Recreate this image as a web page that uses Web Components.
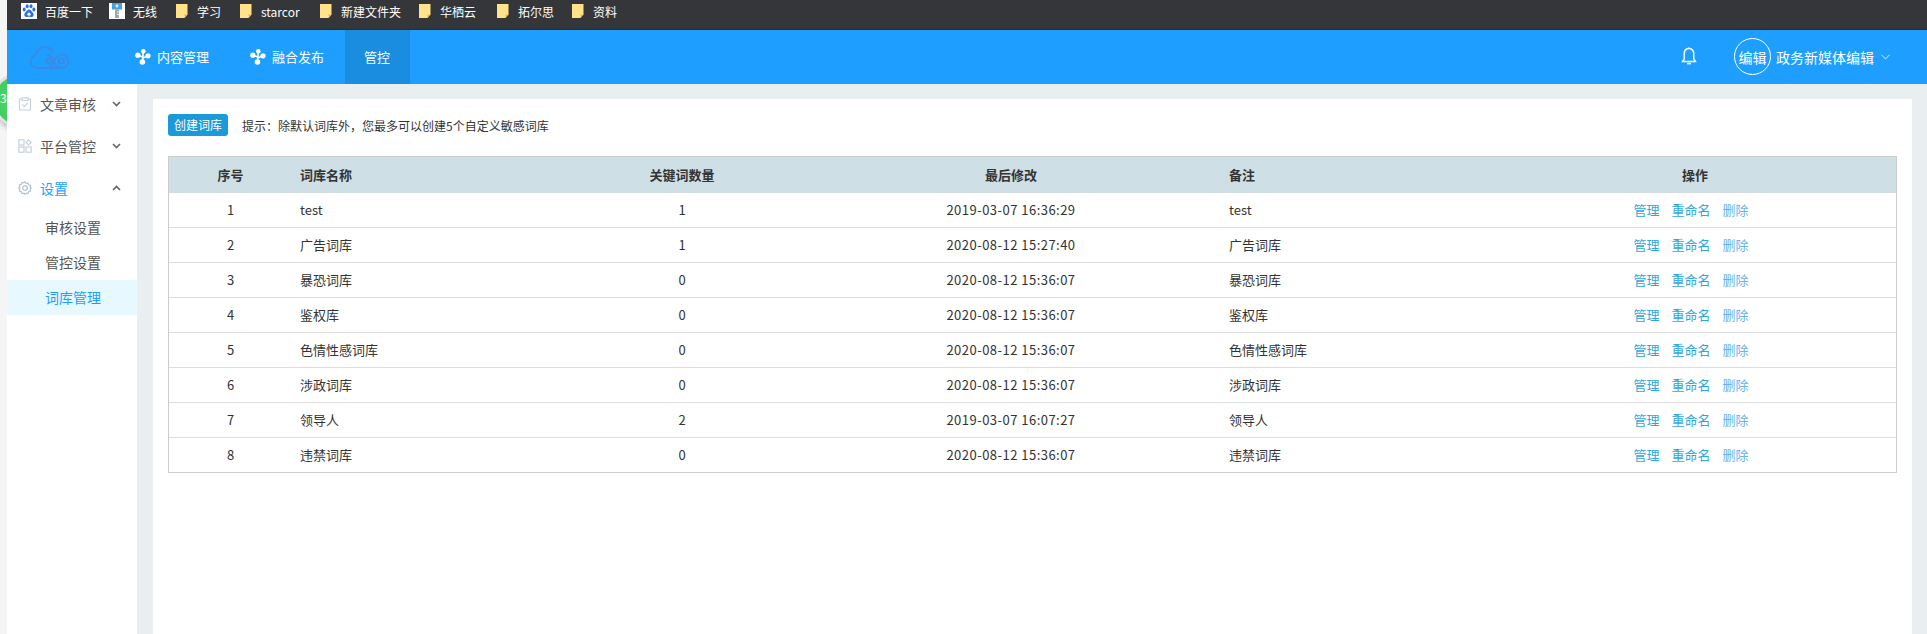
<!DOCTYPE html>
<html lang="zh">
<head>
<meta charset="utf-8">
<title>词库管理</title>
<style>
  html, body { margin: 0; height: 634px; overflow: hidden; }
  body { background: #f5f5f5; font-family: "Noto Sans CJK SC", "Open Sans", sans-serif; font-size: 13px; color: #333; position: relative; }
  x-app { height: 634px; margin-left: 7px; position: relative; z-index: 1; }
</style>
</head>
<body>
<x-green-badge>3</x-green-badge>
<x-app>
  <x-bookmarks slot="bookmarks">
    <x-bookmark kind="baidu">百度一下</x-bookmark>
    <x-bookmark kind="wifi">无线</x-bookmark>
    <x-bookmark>学习</x-bookmark>
    <x-bookmark>starcor</x-bookmark>
    <x-bookmark>新建文件夹</x-bookmark>
    <x-bookmark>华栖云</x-bookmark>
    <x-bookmark>拓尔思</x-bookmark>
    <x-bookmark>资料</x-bookmark>
  </x-bookmarks>
  <x-topbar slot="topbar">
    <x-nav-item icon>内容管理</x-nav-item>
    <x-nav-item icon>融合发布</x-nav-item>
    <x-nav-item active>管控</x-nav-item>
  </x-topbar>
  <x-side-menu slot="side">
    <x-menu-item icon="check">文章审核</x-menu-item>
    <x-menu-item icon="apps">平台管控</x-menu-item>
    <x-menu-item icon="gear" open>设置</x-menu-item>
    <x-sub-item>审核设置</x-sub-item>
    <x-sub-item>管控设置</x-sub-item>
    <x-sub-item active>词库管理</x-sub-item>
  </x-side-menu>
  <x-card slot="main">
    <x-toolbar hint="提示：除默认词库外，您最多可以创建5个自定义敏感词库">创建词库</x-toolbar>
    <x-word-table></x-word-table>
  </x-card>
</x-app>
<script>
function def(name, html) {
  customElements.define(name, class extends HTMLElement {
    constructor() {
      super();
      this.attachShadow({ mode: 'open' });
      if (typeof html !== 'function') this.shadowRoot.innerHTML = html;
    }
    connectedCallback() {
      if (typeof html === 'function') this.shadowRoot.innerHTML = html(this);
    }
  });
}
const ICONS = {
  baidu: '<svg width="16" height="16" viewBox="0 0 16 16"><rect width="16" height="16" fill="#fff"/><g fill="#2b6fe8"><ellipse cx="3.2" cy="6.4" rx="1.5" ry="2"/><ellipse cx="6.2" cy="3.2" rx="1.5" ry="2"/><ellipse cx="10" cy="3.2" rx="1.5" ry="2"/><ellipse cx="12.9" cy="6.4" rx="1.5" ry="2"/><path d="M8 6.6c-1.7 0-2.3 1.6-3.4 2.6-1 .9-1.4 1.7-1.2 3 .2 1.3 1.4 2 2.6 1.8.8-.1 1.3-.3 2-.3s1.3.2 2 .3c1.2.2 2.4-.5 2.6-1.8.2-1.3-.2-2.1-1.2-3C10.3 8.2 9.7 6.6 8 6.6z"/></g><circle cx="8" cy="11.2" r="1.6" fill="#fff"/></svg>',
  wifi: '<svg width="16" height="16" viewBox="0 0 16 16"><rect width="16" height="16" fill="#fff"/><path d="M3 0h10v6.5H3z" fill="#4f9fdf"/><path d="M6 6.5h4V15H6z" fill="#9aa7ad"/><path d="M7.3 1.5h1.400v3H7.300z" fill="#fff"/><path d="M6.500 2.300h3v1h-3z" fill="#fff"/><path d="M10 8.500H8v1h2zM10 11H8v1h2z" fill="#e7ecee"/></svg>',
  folder: '<svg width="12" height="14" viewBox="0 0 12 14"><path d="M0 0h11.500v10.500L8.500 14H0z" fill="#ffe28a"/><path d="M11.500 10.500H8.500V14z" fill="#d9b75a"/></svg>'
};
def('x-app', `<style>
  :host { display: flex; flex-direction: column; }
  .body { flex: 1; display: flex; min-height: 0; }
  .main { flex: 1; display: flex; min-width: 0; background: #e9eef0; padding: 15px 15px 0 16px; }
</style>
<slot name="bookmarks"></slot><slot name="topbar"></slot>
<div class="body"><slot name="side"></slot><div class="main"><slot name="main"></slot></div></div>`);
def('x-bookmarks', `<style>
  :host { display: flex; height: 29.5px; background: #35363a; align-items: flex-start; padding: 3px 0 0 14px; box-sizing: border-box; border-bottom: 1px solid #2c2d30; }
</style><slot></slot>`);
const BM_WIDTHS = { '百度一下': 88, '无线': 66, '学习': 64, 'starcor': 80, '新建文件夹': 99, '华栖云': 78, '拓尔思': 75, '资料': 60 };
def('x-bookmark', el => {
  const kind = el.getAttribute('kind');
  const icon = ICONS[kind] || ICONS.folder;
  const w = BM_WIDTHS[el.textContent.trim()] || 70;
  return `<style>
    :host { display: flex; align-items: center; height: 16px; width: ${w}px; flex: none; color: #fff; font-size: 12px; }
    .i { display: flex; flex: none; width: ${kind ? 16 : 12}px; margin-left: ${kind ? 0 : 1}px; margin-right: ${kind ? 8 : 9}px; }
  </style><span class="i">${icon}</span><slot></slot>`;
});
def('x-topbar', `<style>
  :host { display: flex; height: 54.5px; background: #1e9fff; color: #fff; align-items: stretch; }
  .logo { width: 108px; flex: none; display: flex; align-items: center; padding-left: 22px; box-sizing: border-box; }
  nav { display: flex; gap: 1px; }
  .sp { flex: 1; }
  .bell { display: flex; align-items: center; margin-right: 37px; }
  .user { display: flex; align-items: center; font-size: 14px; padding-right: 37px; }
  .av { width: 35px; height: 35px; border: 1px solid #fff; border-radius: 50%; display: flex; align-items: center; justify-content: center; margin-right: 5px; white-space: nowrap; }
  .ch { margin-left: 7px; display: flex; }
</style>
<div class="logo"><svg width="40" height="26" viewBox="0 0 40 26" fill="none" stroke="#3a8ae6" stroke-width="1.8"><path d="M8 24a6.500 6.500 0 0 1-1.500-12.800C7.800 5.500 12.500 2 17 3c3.300.6 6 3 7 6.200"/><path d="M8 24h24.500a6.800 6.800 0 0 0 0-13.600c-4 0-5.800 3-7.500 6.700-1.700 3.800-3 6.900-7.500 6.900"/><path d="M18 11c3 0 5.500 2.500 6.500 5.500 1 3 3 7.500 8 7.500"/><circle cx="20" cy="17" r="2.500"/><circle cx="32.500" cy="17" r="2.500"/></svg></div>
<nav><slot></slot></nav>
<div class="sp"></div>
<div class="bell"><svg width="16" height="19" viewBox="0 0 16 19" fill="none" stroke="#fff" stroke-width="1.4"><path d="M8 1.500c-3 0-4.800 2.300-4.800 5.200v5.200L1.500 14.500h13l-1.700-2.600V6.700c0-2.900-1.800-5.200-4.800-5.200z"/><path d="M6 16.500h4" stroke="#cfe9ff" stroke-width="2"/><path d="M8 .5v1"/></svg></div>
<div class="user"><div class="av">编辑</div>政务新媒体编辑<span class="ch"><svg width="9" height="6" viewBox="0 0 9 6" fill="none" stroke="#d8eeff"><path d="M.5 .8 4.500 5 8.500 .8"/></svg></span></div>`);
def('x-nav-item', el => `<style>
  :host { display: flex; align-items: center; padding: 0 20px; ${el.hasAttribute('icon') ? '' : 'padding: 0 20px 0 19px;'} gap: 6px; font-size: 13px; color: #fff; ${el.hasAttribute('active') ? 'background:#1b8de0;' : ''} }
  svg { flex: none; }
</style>${el.hasAttribute('icon') ? `<svg width="16" height="16" viewBox="0 0 16 16"><path d="M8.300 2.500 7.500 13M3 6.200 7.800 8M12.800 6.700 8 9" stroke="#fff" stroke-width="1.600"/><circle cx="2.800" cy="6.200" r="2.600" fill="#fff"/><circle cx="8.300" cy="2.300" r="2.300" fill="#fff"/><circle cx="13" cy="6.800" r="2.600" fill="#fff"/><circle cx="7.400" cy="13" r="2.800" fill="#fff"/></svg>` : ''}<slot></slot>`);
def('x-side-menu', `<style>
  :host { display: block; width: 130px; flex: none; background: #fff; border-right: 1px solid #e4e7ea; margin-right: -1px; }
</style><slot></slot>`);
const MENU_ICONS = {
  check: '<svg width="14" height="14" viewBox="0 0 14 14" fill="none" stroke="#c5d1de" stroke-width="1.2"><path d="M4 2H1.500v11h11V2H10"/><path d="M4 .8h6v2.700H4z"/><path d="m4.300 7.300 2 2 3.500-3.500"/></svg>',
  apps: '<svg width="14" height="14" viewBox="0 0 14 14" fill="none" stroke="#c5d1de" stroke-width="1.2"><rect x=".8" y=".8" width="5.200" height="5.200"/><rect x=".8" y="8" width="5.200" height="5.200"/><rect x="8" y="8" width="5.200" height="5.200"/><path d="m10.600 .8 2.600 2.600-2.600 2.600L8 3.400z"/></svg>',
  gear: '<svg width="14" height="14" viewBox="0 0 14 14" fill="none" stroke="#b3c3d6" stroke-width="1.2"><path d="M7 .8l1.100 1.500 1.900-.3.700 1.800 1.800.7-.3 1.900L13.200 7l-1 1.100.3 1.900-1.800.7-.7 1.800-1.900-.3L7 13.200l-1.100-1L4 12.500l-.7-1.800L1.500 10l.3-1.900L.8 7l1-1.100L1.500 4l1.800-.7L4 1.500l1.900.3z"/><circle cx="7" cy="7" r="2.300"/></svg>'
};
def('x-menu-item', el => {
  const open = el.hasAttribute('open');
  return `<style>
    :host { display: flex; align-items: center; height: 42px; box-sizing: border-box; padding: 0 0 2px 11px; font-size: 14px; color: ${open ? '#1e9fff' : '#555'}; }
    .i { display: flex; margin-right: 8px; }
    .t { width: 72px; }
    .c { display: flex; }
  </style><span class="i">${MENU_ICONS[el.getAttribute('icon')]}</span><span class="t"><slot></slot></span><span class="c"><svg width="9" height="6" viewBox="0 0 9 6" fill="none" stroke="#666" stroke-width="1.6"><path d="${open ? 'M1 5 4.500 1.500 8 5' : 'M1 1 4.500 4.500 8 1'}"/></svg></span>`;
});
def('x-sub-item', el => `<style>
  :host { display: flex; align-items: center; height: 35px; box-sizing: border-box; padding: 0 0 2px 38px; font-size: 14px; color: ${el.hasAttribute('active') ? '#1e9fff' : '#555'}; ${el.hasAttribute('active') ? 'background:#e8f8ff;' : ''} }
</style><slot></slot>`);
def('x-card', `<style>
  :host { display: block; flex: 1; min-width: 0; background: #fff; padding: 15px; box-sizing: border-box; }
</style><slot></slot>`);
def('x-toolbar', el => `<style>
  :host { display: flex; align-items: center; height: 22px; margin-bottom: 20px; font-size: 12px; color: #333; gap: 14px; }
  button { all: unset; width: 60px; height: 22px; background: #1a9ad9; color: #fff; border-radius: 3px; text-align: center; line-height: 22px; font-size: 12px; }
</style><button><slot></slot></button><span>${el.getAttribute('hint')}</span>`);
const ROWS = [
  ['1','test','1','2019-03-07 16:36:29','test'],
  ['2','广告词库','1','2020-08-12 15:27:40','广告词库'],
  ['3','暴恐词库','0','2020-08-12 15:36:07','暴恐词库'],
  ['4','鉴权库','0','2020-08-12 15:36:07','鉴权库'],
  ['5','色情性感词库','0','2020-08-12 15:36:07','色情性感词库'],
  ['6','涉政词库','0','2020-08-12 15:36:07','涉政词库'],
  ['7','领导人','2','2019-03-07 16:07:27','领导人'],
  ['8','违禁词库','0','2020-08-12 15:36:07','违禁词库']
];
def('x-word-table', () => `<style>
  :host { display: block; border: 1px solid #ccc; --cols: 123px 271px 238px 420px 273px 1fr; }
</style>
<x-word-row head cells='["序号","词库名称","关键词数量","最后修改","备注"]'></x-word-row>
${ROWS.map((r, i) => `<x-word-row cells='${JSON.stringify(r)}' ${i === ROWS.length - 1 ? 'last' : ''}></x-word-row>`).join('')}`);
def('x-word-row', el => {
  const c = JSON.parse(el.getAttribute('cells'));
  const head = el.hasAttribute('head');
  const last = el.hasAttribute('last');
  return `<style>
    :host { display: grid; grid-template-columns: var(--cols); align-items: center; height: ${head ? 36 : last ? 34 : 35}px; padding-bottom: ${last ? 2 : 1}px; box-sizing: border-box; font-size: 13px; color: #333;
      ${head ? 'background:#cfdfe6;font-weight:700;' : ''} ${last ? '' : 'border-bottom: 1px solid ' + (head ? '#d5dde1' : '#ddd') + ';'} }
    .m { text-align: center; } .l { padding-left: 8px; }
    .date { letter-spacing: ${head ? 0 : 0.47}px; }
    .ops { display: flex; justify-content: center; gap: 12px; padding-right: 8px; }
    a { color: #2fa7dc; text-decoration: none; } a.d { color: #6fb0e8; }
  </style>
  <div class="m">${c[0]}</div><div class="l">${c[1]}</div><div class="m">${c[2]}</div><div class="m date">${c[3]}</div><div class="l">${c[4]}</div>
  ${head ? '<div class="m">操作</div>' : '<div class="ops"><a>管理</a><a>重命名</a><a class="d">删除</a></div>'}`;
});
def('x-green-badge', `<style>
  :host { position: absolute; left: -5px; top: 75px; width: 50px; height: 50px; border-radius: 50%; background: radial-gradient(circle at 40% 50%, #52d96e, #3cc95a 70%, #36b851); box-shadow: 0 0 0 3px #dfe3df, 0 5px 6px rgba(0,0,0,.3); color: #fff; font-size: 12px; display: flex; align-items: flex-start; box-sizing: border-box; padding: 14px 0 0 5px; }
</style><slot></slot>`);
</script>
</body>
</html>
